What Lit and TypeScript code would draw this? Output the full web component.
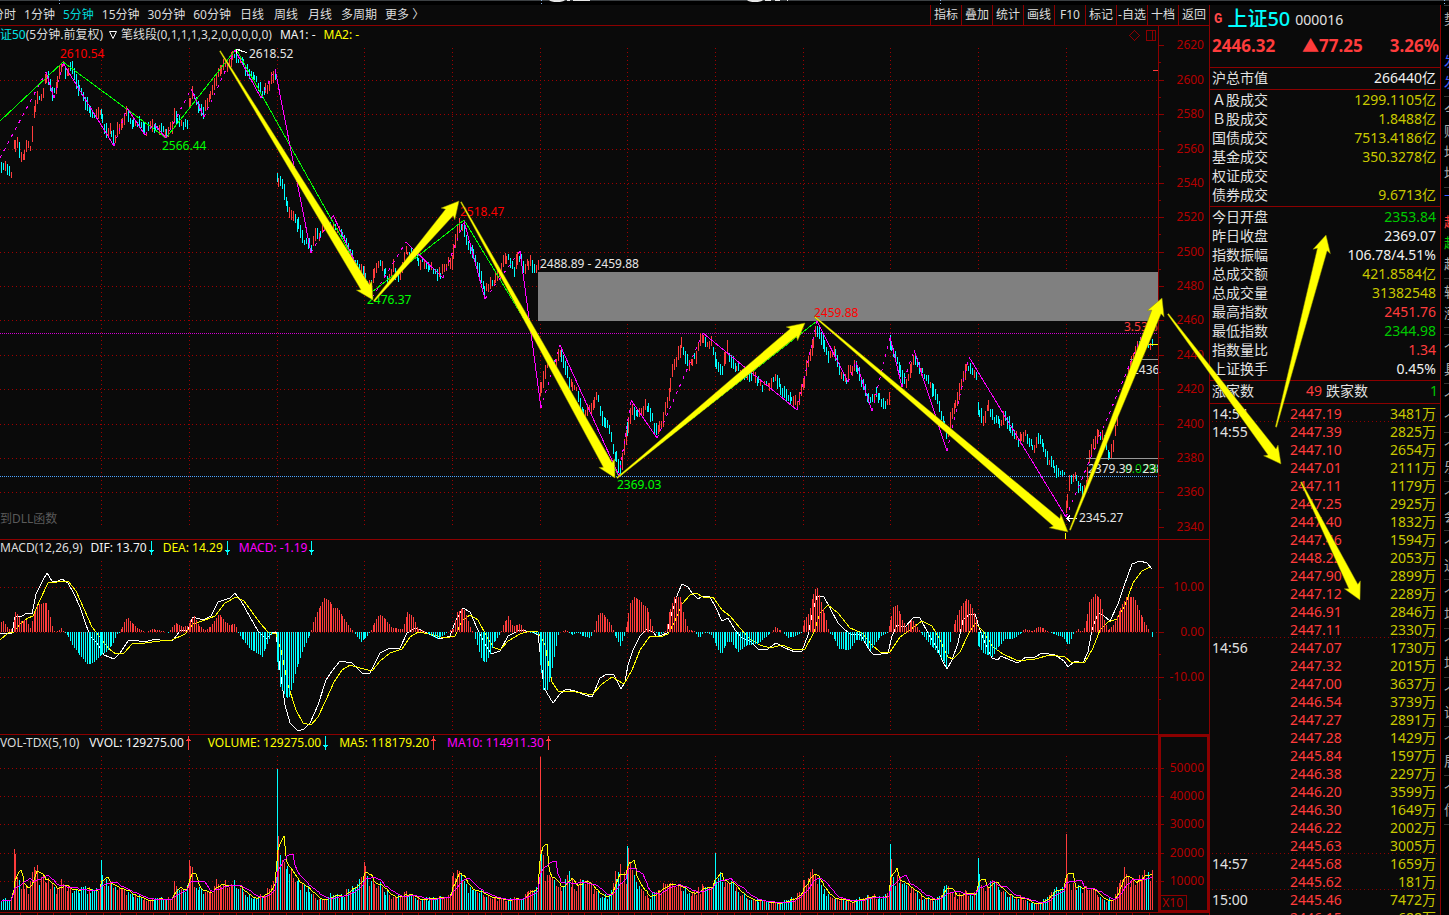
import { LitElement, html, svg, css } from "lit";
import { customElement, property } from "lit/decorators.js";
import { classMap } from "lit/directives/class-map.js";

type Knots = number[];

/* Bars: 48 five-minute candles for each trading day. */
const DAY_STARTS = [14, 101, 189, 277, 364, 452, 540, 627, 715, 803, 890, 978, 1066];
const BAR_X: number[] = [];
for (let x = 1; x < 13; x += 2) BAR_X.push(x);
DAY_STARTS.forEach((s) => {
  for (let j = 0; j < 48; j++) BAR_X.push(s + Math.floor(j * 1.83));
});

function sample(k: Knots, x: number): number {
  for (let i = 2; i < k.length; i += 2) {
    if (x <= k[i]) {
      if (x === k[i]) return k[i + 1];
      const t = (x - k[i - 2]) / (k[i] - k[i - 2]);
      return k[i - 1] + (k[i + 1] - k[i - 1]) * Math.max(0, t);
    }
  }
  return k[k.length - 1];
}
function noise(n: number): number {
  const v = Math.sin(n * 12.9898 + 4.1) * 43758.5453;
  return v - Math.floor(v);
}
function polyline(k: Knots): string {
  let s = "";
  for (let i = 0; i < k.length; i += 2) s += (i ? " " : "") + k[i] + "," + k[i + 1];
  return s;
}

const PRICE: Knots = [
  0, 165, 5, 168, 9, 172, 13, 173, 14, 145, 17, 140, 20, 155, 23, 156, 26, 145, 31, 147, 33, 120, 35, 105, 37, 98, 40, 100,
  43, 90, 46, 76, 49, 82, 52, 93, 55, 93, 57, 80, 60, 67, 63, 66, 66, 72, 70, 67, 74, 73, 78, 88, 82, 93, 86, 104, 90, 112,
  95, 115, 100, 112, 103, 125, 107, 135, 110, 130, 114, 139, 118, 128, 122, 124, 126, 112, 131, 122, 138, 122, 145, 132,
  152, 126, 160, 128, 166, 134, 172, 125, 175, 115, 180, 122, 188, 127, 189, 105, 193, 92, 197, 105, 203, 113, 208, 98,
  213, 86, 218, 72, 223, 65, 228, 65, 233, 53, 236, 60, 242, 62, 248, 75, 256, 80, 262, 93, 267, 88, 275, 73, 276, 76,
  277, 180, 281, 178, 285, 195, 288, 215, 293, 215, 298, 225, 303, 240, 307, 240, 311, 247, 315, 232, 320, 235, 323, 225,
  338, 230, 345, 240, 352, 258, 358, 268, 363, 270, 366, 283, 371, 286, 377, 262, 383, 270, 388, 280, 393, 268, 399, 280,
  405, 252, 412, 252, 418, 262, 425, 262, 432, 270, 440, 274, 447, 265, 452, 262, 455, 240, 459, 227, 463, 230, 468, 245,
  474, 255, 480, 275, 485, 291, 490, 283, 497, 278, 502, 265, 507, 257, 514, 270, 518, 257, 524, 268, 530, 260, 535, 272,
  539, 265, 540, 390, 544, 372, 550, 362, 555, 365, 560, 351, 566, 368, 570, 385, 576, 388, 583, 415, 588, 410, 597, 397,
  603, 420, 608, 425, 612, 445, 617, 462, 620, 470, 624, 450, 628, 425, 631, 408, 636, 415, 642, 412, 646, 405, 650, 415,
  657, 433, 662, 420, 668, 400, 672, 370, 678, 355, 681, 345, 688, 365, 695, 358, 700, 340, 705, 342, 712, 343, 716, 365,
  722, 368, 727, 350, 733, 365, 740, 370, 748, 375, 756, 378, 762, 386, 768, 385, 775, 378, 782, 390, 790, 400, 797, 404,
  803, 385, 806, 370, 812, 345, 816, 328, 821, 340, 828, 355, 834, 350, 840, 373, 846, 378, 850, 370, 855, 366, 862, 385,
  870, 402, 876, 395, 885, 405, 889, 398, 890, 345, 896, 358, 901, 372, 905, 383, 909, 375, 914, 355, 920, 370, 926, 378,
  933, 390, 940, 410, 947, 437, 951, 415, 957, 400, 962, 378, 967, 364, 972, 372, 977, 374, 978, 408, 982, 420, 988, 408,
  995, 420, 1000, 425, 1004, 412, 1010, 428, 1018, 440, 1025, 433, 1033, 448, 1039, 440, 1048, 458, 1056, 470, 1065, 475,
  1066, 508, 1069, 485, 1075, 475, 1078, 485, 1082, 495, 1086, 485, 1090, 450, 1095, 440, 1098, 432, 1104, 440, 1109, 455,
  1114, 440, 1118, 410, 1125, 385, 1130, 365, 1137, 347, 1142, 342, 1148, 345, 1152, 342,
];
const HIST: Knots = [
  0, 8, 2, 11, 4, 10, 8, 3, 13, 3, 15, 20, 18, 17, 21, 11, 26, 12, 30, 4, 34, 18, 38, 28, 46, 29, 50, 15, 53, 2, 56, 0, 61, 4,
  64, 0, 67, -3, 72, -13, 80, -24, 88, -33, 95, -29, 103, -21, 107, -20, 113, -11, 117, -2, 120, 0, 123, 8, 127, 15, 131, 10,
  138, 3, 145, 0, 152, 3, 162, 1, 168, -1, 173, 6, 176, 9, 182, 5, 188, 6, 190, 12, 194, 16, 199, 6, 205, 2, 211, 6, 219, 18,
  225, 10, 229, 7, 235, 8, 238, -1, 243, -8, 250, -17, 258, -22, 262, -25, 266, -14, 272, -1, 275, 1, 277, -30, 280, -55,
  284, -62, 288, -68, 292, -55, 296, -38, 302, -20, 310, -2, 313, 10, 318, 22, 324, 34, 329, 32, 333, 24, 338, 24, 343, 14,
  350, 4, 355, -2, 361, -10, 366, -5, 370, 0, 373, 7, 379, 18, 385, 13, 392, 4, 402, 3, 405, 10, 407, 20, 413, 15, 418, 3,
  424, 1, 430, -3, 437, -7, 444, -3, 449, 1, 453, 3, 457, 20, 463, 24, 467, 14, 471, 2, 473, 0, 476, -10, 480, -24, 485, -32,
  490, -22, 494, -10, 500, -2, 503, 7, 508, 16, 513, 5, 520, 9, 524, 1, 530, -1, 539, -3, 540, -33, 543, -58, 547, -58,
  551, -42, 555, -20, 558, -3, 560, 0, 565, 2, 572, -3, 577, 0, 582, -4, 590, -6, 594, 2, 597, 16, 601, 20, 608, 12, 612, 5,
  615, -4, 620, -14, 625, -1, 627, 10, 629, 28, 634, 35, 639, 32, 643, 27, 647, 24, 651, 9, 654, 1, 658, -4, 663, -1, 666, 2,
  669, 20, 674, 35, 680, 35, 683, 20, 688, 2, 694, 1, 699, -7, 703, 0, 712, -3, 716, -14, 721, -23, 727, -10, 731, -10,
  738, -20, 747, -13, 757, -12, 767, -4, 772, 1, 775, 5, 781, 1, 788, -6, 796, -4, 802, -1, 804, 12, 809, 20, 814, 42, 817, 44,
  821, 30, 826, 12, 829, -1, 833, -4, 838, -17, 849, -18, 856, -8, 864, -9, 870, -19, 876, -10, 882, -3, 888, -1, 890, 12,
  893, 25, 897, 27, 902, 12, 906, 5, 912, 13, 918, 3, 923, -4, 930, -13, 940, -24, 946, -35, 950, -10, 952, 0, 955, 12,
  960, 25, 967, 34, 973, 22, 977, 10, 978, -14, 984, -22, 992, -25, 998, -15, 1005, -7, 1013, -7, 1020, -2, 1024, 3, 1033, 1,
  1039, 6, 1047, 1, 1055, -3, 1063, -5, 1068, -14, 1073, -2, 1078, 3, 1081, 0, 1085, 5, 1089, 30, 1095, 38, 1100, 33,
  1104, 12, 1108, 2, 1114, 8, 1120, 24, 1126, 35, 1134, 35, 1139, 22, 1144, 10, 1150, 0, 1152, -5,
];
const DIF: Knots = [
  0, 633, 12, 633, 15, 617, 22, 616, 27, 613, 32, 614, 36, 594, 42, 582, 47, 573, 52, 581, 57, 582, 62, 579, 68, 583, 74, 594,
  80, 607, 86, 625, 91, 637, 97, 643, 104, 655, 114, 659, 120, 653, 128, 641, 133, 640, 145, 642, 155, 639, 165, 641, 173, 640,
  180, 631, 188, 630, 193, 617, 203, 620, 211, 616, 218, 602, 230, 598, 235, 593, 241, 601, 250, 617, 258, 631, 266, 639,
  272, 633, 276, 632, 280, 670, 285, 705, 290, 723, 298, 731, 304, 729, 310, 723, 318, 705, 326, 680, 332, 671, 340, 661,
  352, 663, 362, 673, 370, 673, 380, 653, 388, 649, 400, 648, 407, 633, 416, 628, 425, 632, 440, 639, 450, 636, 456, 620,
  463, 608, 470, 612, 477, 628, 484, 642, 491, 654, 500, 651, 508, 636, 520, 630, 532, 632, 538, 635, 541, 660, 544, 688,
  553, 703, 560, 694, 566, 689, 575, 691, 585, 695, 592, 697, 600, 678, 607, 674, 614, 675, 621, 689, 625, 682, 628, 665,
  633, 650, 640, 636, 647, 629, 653, 632, 657, 637, 667, 633, 672, 612, 678, 593, 682, 584, 688, 587, 692, 593, 698, 599,
  703, 596, 710, 597, 716, 608, 722, 621, 728, 618, 735, 630, 742, 638, 750, 641, 758, 649, 768, 649, 776, 643, 785, 648,
  795, 652, 802, 651, 808, 635, 813, 610, 817, 596, 824, 597, 830, 608, 838, 623, 845, 630, 852, 635, 860, 634, 870, 651,
  874, 655, 888, 653, 892, 636, 897, 625, 905, 627, 914, 617, 920, 618, 928, 633, 938, 650, 943, 662, 947, 669, 952, 660,
  958, 643, 963, 620, 970, 614, 975, 614, 980, 630, 985, 643, 992, 658, 998, 660, 1001, 656, 1010, 660, 1018, 663, 1026, 657,
  1035, 657, 1042, 653, 1055, 655, 1064, 661, 1068, 667, 1075, 661, 1083, 663, 1088, 652, 1092, 630, 1098, 613, 1104, 616,
  1110, 621, 1118, 604, 1124, 586, 1132, 564, 1140, 561, 1147, 563, 1152, 569,
];
const DEA: Knots = [
  0, 640, 8, 633, 14, 632, 20, 624, 28, 618, 33, 616, 40, 600, 48, 583, 57, 582, 68, 581, 76, 591, 84, 609, 92, 627, 100, 637,
  108, 648, 116, 654, 124, 653, 132, 644, 145, 643, 160, 641, 172, 640, 185, 634, 193, 624, 205, 620, 215, 616, 225, 603,
  236, 597, 244, 601, 252, 612, 260, 623, 268, 632, 276, 634, 281, 650, 288, 685, 296, 710, 303, 723, 311, 725, 318, 717,
  326, 700, 334, 682, 342, 670, 350, 665, 360, 668, 372, 671, 380, 661, 390, 653, 402, 649, 410, 637, 418, 632, 430, 634,
  445, 638, 455, 636, 462, 621, 470, 615, 478, 620, 486, 635, 493, 647, 500, 650, 508, 641, 520, 634, 530, 631, 538, 632,
  545, 645, 552, 682, 558, 691, 570, 691, 582, 693, 592, 695, 602, 684, 612, 677, 624, 684, 632, 670, 640, 650, 650, 636,
  660, 637, 668, 634, 675, 621, 682, 604, 690, 595, 696, 593, 703, 597, 713, 597, 722, 610, 730, 616, 740, 628, 750, 639,
  760, 645, 770, 648, 782, 645, 795, 650, 805, 649, 814, 632, 820, 613, 828, 605, 838, 613, 850, 628, 862, 633, 872, 645,
  880, 652, 890, 652, 900, 637, 910, 630, 922, 621, 932, 626, 940, 640, 948, 657, 953, 659, 960, 652, 968, 635, 975, 623,
  983, 631, 993, 647, 1003, 654, 1018, 661, 1035, 659, 1050, 655, 1065, 657, 1072, 663, 1085, 662, 1093, 648, 1100, 630,
  1108, 622, 1117, 619, 1125, 605, 1133, 583, 1142, 571, 1150, 567,
];
const VOLUME: Knots = [
  0, 10, 13, 12, 14, 61, 16, 38, 20, 28, 28, 18, 33, 42, 36, 50, 38, 35, 46, 33, 55, 20, 62, 28, 70, 22, 80, 20, 90, 22,
  100, 22, 101, 50, 103, 35, 110, 25, 117, 26, 130, 16, 145, 12, 155, 12, 173, 14, 174, 28, 180, 18, 188, 26, 189, 50, 191, 46,
  195, 26, 203, 18, 208, 16, 216, 30, 220, 30, 228, 24, 233, 31, 240, 22, 255, 14, 262, 16, 272, 25, 276, 30, 277, 141, 278, 75,
  282, 50, 287, 55, 292, 40, 300, 28, 310, 20, 320, 12, 335, 16, 345, 18, 356, 28, 363, 30, 364, 48, 366, 32, 377, 30, 385, 18,
  395, 14, 405, 18, 420, 11, 440, 13, 451, 15, 452, 34, 457, 43, 463, 32, 470, 20, 480, 22, 490, 12, 505, 11, 520, 14, 535, 20,
  539, 26, 540, 153, 541, 60, 545, 38, 551, 35, 560, 22, 569, 37, 575, 20, 581, 33, 590, 26, 600, 15, 610, 16, 615, 36, 620, 42,
  626, 30, 627, 64, 629, 50, 634, 32, 640, 22, 650, 14, 660, 20, 671, 34, 680, 26, 690, 15, 700, 22, 714, 25, 715, 57, 716, 35,
  719, 38, 725, 28, 735, 24, 745, 14, 760, 9, 780, 8, 795, 14, 802, 18, 803, 30, 812, 38, 817, 34, 825, 18, 840, 12, 850, 9,
  860, 13, 880, 14, 889, 18, 890, 66, 892, 33, 903, 32, 912, 20, 922, 12, 935, 12, 946, 26, 955, 15, 965, 18, 977, 20, 978, 52,
  980, 32, 985, 26, 993, 31, 1005, 16, 1020, 14, 1030, 9, 1040, 8, 1052, 18, 1065, 26, 1066, 76, 1067, 38, 1070, 28, 1078, 22,
  1090, 26, 1100, 12, 1112, 10, 1119, 30, 1124, 38, 1130, 32, 1140, 34, 1152, 38,
];
const SEGMENTS: Knots = [0, 121, 63, 62, 166, 138, 236, 49, 372, 292, 464, 220, 619, 476, 817, 321];
/* Strokes alternate: a rise is dashed, the fall after it is solid. */
const STROKES: Knots = [
  0, 158, 46, 72, 54, 98, 63, 63, 114, 146, 127, 108, 145, 135, 154, 124, 166, 138, 191, 89, 204, 117, 235, 50, 261, 98,
  275, 69, 311, 253, 333, 215, 372, 298, 406, 242, 443, 278, 464, 221, 485, 299, 520, 251, 541, 408, 560, 345, 619, 476,
  631, 400, 657, 438, 703, 333, 797, 410, 817, 321, 848, 382, 856, 362, 872, 411, 890, 337, 902, 387, 914, 350, 947, 451,
  969, 357, 1066, 517, 1142, 335,
];
const ARROWS = [
  [220, 51, 373, 300], [374, 301, 459, 201], [461, 202, 615, 478], [617, 478, 805, 323], [815, 317, 1068, 532],
  [1070, 530, 1162, 298], [1168, 314, 1281, 464], [1276, 427, 1326, 235], [1301, 482, 1360, 600],
];

const RED_OPENINGS = [14, 189, 364, 452, 540, 803, 1066];

function candles() {
  let red = "", cyan = "";
  BAR_X.forEach((x, i) => {
    const open = DAY_STARTS.includes(x);
    const mid = sample(PRICE, x);
    const step = i && !open ? Math.min(8, Math.abs(mid - sample(PRICE, BAR_X[i - 1]))) : 6;
    const half = 1.5 + noise(i) * 4 + step * 0.4;
    const c = mid + (noise(i + 900) - 0.5) * 6;
    const up = open ? RED_OPENINGS.includes(x) : mid + (noise(i + 300) - 0.5) * 4 < sample(PRICE, x - 1);
    const d = `M${x + 0.5} ${Math.round(c - half)}V${Math.round(c + half)}`;
    if (up) red += d; else cyan += d;
  });
  return { red, cyan };
}
function histogram() {
  let red = "", cyan = "";
  BAR_X.forEach((x) => {
    const v = Math.round(sample(HIST, x));
    if (v > 0) red += `M${x + 0.5} 632V${632 - v}`;
    else if (v < 0) cyan += `M${x + 0.5} 632V${632 - v}`;
  });
  return { red, cyan };
}
function volumes() {
  let red = "", cyan = "";
  const h: number[] = [];
  BAR_X.forEach((x, i) => {
    const open = DAY_STARTS.includes(x);
    const v = sample(VOLUME, x) * (open ? 1 : 0.72 + noise(i + 50) * 0.42);
    h.push(v);
    const d = `M${x + 0.5} 910V${Math.round(910 - v)}`;
    const up = open ? RED_OPENINGS.includes(x) : noise(i + 300) < 0.32 || sample(PRICE, x) < sample(PRICE, x - 2) - 1;
    if (up) red += d; else cyan += d;
  });
  const average = (n: number) =>
    h.map((_, i) => {
      const part = h.slice(Math.max(0, i - n + 1), i + 1);
      return `${BAR_X[i]},${Math.round(910 - part.reduce((a, b) => a + b, 0) / part.length)}`;
    }).join(" ");
  return { red, cyan, ma5: average(5), ma10: average(10) };
}
function arrowPoints([x0, y0, x1, y1]: number[]): string {
  const len = Math.hypot(x1 - x0, y1 - y0);
  const ux = (x1 - x0) / len, uy = (y1 - y0) / len;
  const at = (back: number, side: number) => `${(x1 - ux * back - uy * side).toFixed(1)},${(y1 - uy * back + ux * side).toFixed(1)}`;
  return [at(len, 0.6), at(15, 5), at(17, 9), at(0, 0), at(17, -9), at(15, -5), at(len, -0.6)].join(" ");
}

const BARS = candles();
const HISTO = histogram();
const VOLS = volumes();

function grid(rows: number[], top: number, bottom: number) {
  return svg`
    ${rows.map((y) => svg`<path class="dots" d="M0 ${y + 0.5}H1158"/>`)}
    ${DAY_STARTS.slice(1).map((x) => svg`<path class="dots" d="M${x + 0.5} ${top}V${bottom}"/>`)}`;
}

@customElement("price-chart")
export class PriceChart extends LitElement {
  static styles = css`
    :host { display: block; min-width: 0; }
    .panel { display: grid; position: relative; }
    .panel > * { grid-area: 1 / 1; }
    svg { display: block; width: 100%; height: auto; font-size: 12px; }
    .legend { display: flex; align-items: center; height: 18px; font-size: 12px; line-height: 18px; color: #dcdcdc; white-space: pre; z-index: 1; }
    .legend.tall { height: 16px; line-height: 16px; }
    .clip { margin-left: -12px; }
    .item { display: flex; align-items: center; }
    .g1 { margin-left: 8px; }
    .g2 { margin-left: 10px; }
    .g3 { margin-left: 16px; }
    .legend svg { flex: none; width: 7px; height: 14px; margin-left: 1px; }
    .legend svg.tri { width: 10px; height: 10px; margin: 0 3px 0 5px; }
    .white { color: #f4f4f4; fill: #e6e6e6; }
    .cyan { color: #00e5e5; }
    .yellow { color: #ff0; }
    .magenta { color: #f0f; }
    .dots { stroke: #a00000; stroke-width: 1; stroke-dasharray: 1 3; fill: none; shape-rendering: crispEdges; }
    .edge { stroke: #8c0000; stroke-width: 1; fill: none; shape-rendering: crispEdges; }
    .thick { stroke: #8c0000; stroke-width: 2; fill: none; shape-rendering: crispEdges; }
    .up { stroke: #ff3c3c; stroke-width: 1; fill: none; shape-rendering: crispEdges; }
    .down { stroke: #0ff; stroke-width: 1; fill: none; shape-rendering: crispEdges; }
    .axis { fill: #b40000; text-anchor: end; }
    .high { fill: #f00; }
    .low { fill: #0f0; }
    .line { fill: none; stroke-width: 1; shape-rendering: crispEdges; }
    .s-green { stroke: #0f0; }
    .s-magenta { stroke: #f0f; }
    .s-yellow { stroke: #ff0; }
    .s-white { stroke: #fff; }
    .s-gray { stroke: #999; }
    .dash { stroke-dasharray: 3 5; }
    .cap { stroke: #d000d0; stroke-dasharray: 1 1; }
    .base { stroke: #4aa3ff; stroke-dasharray: 1 1; }
    .gap { fill: #808080; }
    .note { fill: #5a5a5a; }
    .rise { fill: #ff3c3c; }
    .fall { fill: #00c800; }
  `;

  private mark(up: boolean) {
    return up
      ? html`<svg viewBox="0 0 7 14"><path class="up" d="M3.5 0V14M2 3.5H5M1 4.5H6"/></svg>`
      : html`<svg viewBox="0 0 7 14"><path class="down" d="M3.5 0V14M1 9.5H6M2 10.5H5"/></svg>`;
  }
  private axis(values: [string, number][], minor: number) {
    return svg`
      <path class="edge" d="${values.map(([, y]) => `M1159 ${y + 0.5}h5M1159 ${y + minor + 0.5}h2`).join("")}"/>
      ${values.map(([t, y]) => svg`<text class="axis" x="1204" y="${y + 4}">${t}</text>`)}`;
  }
  private strokes() {
    const out = [];
    for (let i = 0; i + 3 < STROKES.length; i += 2) {
      const rising = STROKES[i + 3] < STROKES[i + 1];
      out.push(svg`<polyline class="line s-magenta ${rising ? "dash" : ""}" points="${polyline(STROKES.slice(i, i + 4))}"/>`);
    }
    return out;
  }

  render() {
    const rows = [80, 114, 149, 183, 217, 252, 286, 320, 355, 389, 424, 458, 492];
    const prices: [string, number][] = [45, ...rows, 527].map((y, i) => [String(2620 - i * 20), y]);
    return html`
      <section class="panel">
        <svg viewBox="0 26 1209 514" role="img" aria-label="K线">
          <defs><clipPath id="plot"><path d="M0 26H1158V540H0z"/></clipPath></defs>
          ${grid(rows, 48, 526)}
          <path class="edge" d="M1158.5 26V540M0 539.5H1209M1134.5 30.5l5 5l-5 5l-5 -5zM1146.5 30.5h9v10h-9zM1152.5 30.5v10"/>
          <path class="up" d="M1153 70.5H1158"/>
          ${this.axis(prices, 17)}
          <path class="line base" d="M0 476.5H1158"/>
          <path class="line cap" d="M0 333.5H1158"/>
          <path class="up" d="${BARS.red}"/>
          <path class="down" d="${BARS.cyan}"/>
          <path class="gap" d="M538 272H1158V321H538z"/>
          <polyline class="line s-green" points="${polyline(SEGMENTS)}"/>
          ${this.strokes()}
          <path class="line s-gray" d="M1130 359.5H1158M1086 458.5H1158"/>
          <path class="line s-yellow" d="M1148 344.5H1158M1065.5 533V539"/>
          <path class="line s-white" d="M247 52.5L236 49.5M236 49.5h4M236 49.5v4M1077 518.5H1067M1070 515.5l-3 3l3 3"/>
          <text class="high" x="60" y="58">2610.54</text>
          <text class="white" x="249" y="58">2618.52</text>
          <text class="low" x="162" y="150">2566.44</text>
          <text class="low" x="367" y="304">2476.37</text>
          <text class="high" x="460" y="216">2518.47</text>
          <text class="white" x="540" y="268">2488.89 - 2459.88</text>
          <text class="high" x="814" y="317">2459.88</text>
          <text class="low" x="617" y="489">2369.03</text>
          <text class="white" x="1079" y="522">2345.27</text>
          <text class="note" x="0" y="523">到DLL函数</text>
          <g clip-path="url(#plot)">
            <text class="rise" x="1124" y="331">3.53%</text>
            <text class="white" x="1132" y="374">2436.61</text>
            <text class="fall" x="1125" y="473">0.02%</text>
            <text class="white" x="1088" y="473">2379.39 - 2381.02</text>
          </g>
        </svg>
        <div class="legend">
          <span class="cyan clip">上证50</span><span>(5分钟.前复权)</span>
          <svg class="tri" viewBox="0 0 10 10"><path class="s-white" fill="none" d="M1.500 1.500H8.500L5 8.500z"/></svg>
          <span>笔线段(0,1,1,1,3,2,0,0,0,0,0)</span>
          <span class="white g1">MA1: -</span><span class="yellow g1">MA2: -</span>
        </div>
      </section>
      <section class="panel">
        <svg viewBox="0 540 1209 195" role="img" aria-label="MACD">
          ${grid([587, 632, 677], 561, 733)}
          <path class="edge" d="M1158.5 540V735M0 734.5H1209"/>
          ${this.axis([["10.00", 587], ["0.00", 632], ["-10.00", 677]], 22)}
          <polyline class="line s-white" points="${polyline(DIF)}"/>
          <polyline class="line s-yellow" points="${polyline(DEA)}"/>
          <path class="up" d="${HISTO.red}"/>
          <path class="down" d="${HISTO.cyan}"/>
        </svg>
        <div class="legend tall">
          <span>MACD(12,26,9)</span>
          <span class="item white g1">DIF: 13.70${this.mark(false)}</span>
          <span class="item yellow g1">DEA: 14.29${this.mark(false)}</span>
          <span class="item magenta g1">MACD: -1.19${this.mark(false)}</span>
        </div>
      </section>
      <section class="panel">
        <svg viewBox="0 735 1209 180" role="img" aria-label="VOL">
          ${grid([768, 796, 824, 853, 881], 756, 910)}
          <path class="edge" d="M1158.5 735V912M0 912.5H1209M1159 895.5H1186.5V911"/>
          <path class="thick" d="M1160 736H1208V911H1160z"/>
          <path class="edge" d="${Array.from({ length: 69 }, (_, i) => `M${Math.round(20 + i * 16.6) + 0.5} 913v2`).join("")}"/>
          ${this.axis([["50000", 768], ["40000", 796], ["30000", 824], ["20000", 853], ["10000", 881]], 14)}
          <text class="axis" x="1183" y="907">X10</text>
          <path class="up" d="${VOLS.red}"/>
          <path class="down" d="${VOLS.cyan}"/>
          <polyline class="line s-yellow" points="${VOLS.ma5}"/>
          <polyline class="line s-magenta" points="${VOLS.ma10}"/>
        </svg>
        <div class="legend tall">
          <span>VOL-TDX(5,10)</span>
          <span class="item white g2">VVOL: 129275.00${this.mark(true)}</span>
          <span class="item yellow g3">VOLUME: 129275.00${this.mark(false)}</span>
          <span class="item yellow g2">MA5: 118179.20${this.mark(true)}</span>
          <span class="item magenta g2">MA10: 114911.30${this.mark(true)}</span>
        </div>
      </section>`;
  }
}

type Row = [string, string, string];
const TURNOVER: Row[] = [
  ["Ａ股成交", "1299.1105亿", "y"], ["Ｂ股成交", "1.8488亿", "y"], ["国债成交", "7513.4186亿", "y"],
  ["基金成交", "350.3278亿", "y"], ["权证成交", "", "y"], ["债券成交", "9.6713亿", "y"],
];
const TODAY: Row[] = [
  ["今日开盘", "2353.84", "g"], ["昨日收盘", "2369.07", "w"], ["指数振幅", "106.78/4.51%", "w"],
  ["总成交额", "421.8584亿", "y"], ["总成交量", "31382548", "y"], ["最高指数", "2451.76", "r"],
  ["最低指数", "2344.98", "g"], ["指数量比", "1.34", "r"], ["上证换手", "0.45%", "w"],
];
const TICKS: Row[] = [
  ["14:54", "2447.19", "3481万"], ["14:55", "2447.39", "2825万"], ["", "2447.10", "2654万"], ["", "2447.01", "2111万"],
  ["", "2447.11", "1179万"], ["", "2447.25", "2925万"], ["", "2447.40", "1832万"], ["", "2447.46", "1594万"],
  ["", "2448.22", "2053万"], ["", "2447.90", "2899万"], ["", "2447.12", "2289万"], ["", "2446.91", "2846万"],
  ["", "2447.11", "2330万"], ["14:56", "2447.07", "1730万"], ["", "2447.32", "2015万"], ["", "2447.00", "3637万"],
  ["", "2446.54", "3739万"], ["", "2447.27", "2891万"], ["", "2447.28", "1429万"], ["", "2445.84", "1597万"],
  ["", "2446.38", "2297万"], ["", "2446.20", "3599万"], ["", "2446.30", "1649万"], ["", "2446.22", "2002万"],
  ["", "2445.63", "3005万"], ["14:57", "2445.68", "1659万"], ["", "2445.62", "181万"], ["15:00", "2445.46", "7472万"],
  ["", "2446.15", "688万"],
];

@customElement("quote-panel")
export class QuotePanel extends LitElement {
  static styles = css`
    :host { display: block; border-left: 1px solid #8c0000; border-right: 1px solid #8c0000; background: #0a0a0a; color: #e1e1e1; font-size: 14px; overflow: hidden; min-height: 0; }
    header { height: 62px; }
    .name { display: flex; align-items: center; gap: 5px; height: 28px; padding-left: 4px; }
    .flag { font: bold 14px/28px "Liberation Mono", monospace; color: #ff4848; }
    h1 { margin: 0; font-size: 20px; font-weight: 500; line-height: 24px; color: #0ff; }
    .quote { display: flex; justify-content: space-between; padding: 0 1px 0 2px; font-size: 17px; font-weight: bold; line-height: 26px; color: #ff3c3c; }
    dl { margin: 0; padding: 0 4px 2px 2px; border-top: 1px solid #8c0000; }
    .row { display: flex; justify-content: space-between; line-height: 19px; height: 19px; }
    .wide { display: flex; line-height: 19px; height: 20px; }
    .wide .count { width: 68px; text-align: right; margin-right: 4px; }
    .wide .last { flex: 1; text-align: right; margin-right: -2px; }
    dt, dd { margin: 0; }
    .y { color: #c8c800; }
    .g { color: #00c800; }
    .r { color: #ff3c3c; }
    .w { color: #f0f0f0; }
    table { width: 100%; border-spacing: 0; border-top: 1px solid #8c0000; table-layout: fixed; }
    td { padding: 1px 0 0; height: 17px; line-height: 17px; }
    .split { background: repeating-linear-gradient(90deg, #8c0000 0 1px, transparent 1px 4px) 2px 100% / 100% 1px no-repeat; }
    .time { width: 78px; padding-left: 2px; }
    .vol { padding-right: 4px; text-align: right; }
  `;
  private rows(list: Row[]) {
    return list.map(([k, v, c]) => html`<div class="row"><dt>${k}</dt><dd class="${c}">${v}</dd></div>`);
  }
  render() {
    return html`
      <header>
        <div class="name"><span class="flag">G</span><h1>上证50</h1><span>000016</span></div>
        <div class="quote"><span>2446.32</span><span>▲77.25</span><span>3.26%</span></div>
      </header>
      <dl><div class="row"><dt>沪总市值</dt><dd class="w">266440亿</dd></div></dl>
      <dl>${this.rows(TURNOVER)}</dl>
      <dl>${this.rows(TODAY)}</dl>
      <dl class="wide"><dt>涨家数</dt><dd class="r count">49</dd><dt>跌家数</dt><dd class="g last">1</dd></dl>
      <table>
        <tbody>
          ${TICKS.map(([t, p, v], i) => html`
            <tr class=${classMap({ split: !!TICKS[i + 1]?.[0] })}>
              <td class="time">${t}</td><td class="r">${p}</td><td class="vol y">${v}</td>
            </tr>`)}
        </tbody>
      </table>`;
  }
}

@customElement("app-root")
export class AppRoot extends LitElement {
  @property() period = "5分钟";

  static styles = css`
    :host { display: block; position: relative; height: 100vh; overflow: hidden; background: #0a0a0a; color: #dcdcdc; font-family: "Noto Sans", "Noto Sans CJK SC", sans-serif; }
    .shell { display: grid; grid-template-columns: minmax(0, 1fr) 232px 8px; grid-template-rows: 5px minmax(0, 1fr); height: 100%; }
    .strip { grid-column: 1 / -1; display: flex; background: #000; border-top: 1px solid #3c4043; }
    .left { display: flex; flex-direction: column; min-width: 0; }
    .toolbar { display: flex; justify-content: space-between; flex: none; height: 20px; border-bottom: 1px solid #8c0000; overflow: hidden; }
    button { font: inherit; font-size: 12px; line-height: 20px; padding: 0; border: 0; background: none; color: inherit; white-space: nowrap; cursor: pointer; }
    .periods { display: flex; gap: 8px; margin-left: -8px; }
    .periods .zh { padding: 0 1px; }
    .periods .on { color: #00d8d8; }
    .tools { display: grid; grid-template-columns: repeat(9, 31px); }
    .tools button { border-left: 1px solid #8c0000; overflow: hidden; }
    .side { background: #000; overflow: hidden; padding-left: 3px; font-size: 14px; line-height: 20px; color: #aaa; }
    .side p { margin: 0; width: 14px; height: 21px; }
    .side .rule { border-top: 1px solid #333; padding: 3px 0; }
    .side .blue { color: #4060ff; }
    .side .red { color: #ff3c3c; }
    .side .green { color: #00c800; }
    .marks { position: absolute; inset: 0 0 auto 0; width: 100%; pointer-events: none; }
    .arrow { fill: #ff0; stroke: #8c8c00; stroke-width: .5; }
    .blob { fill: #e6e6e6; }
    .tick { fill: #8fb8e8; }
  `;
  render() {
    const periods = ["分时", "1分钟", "5分钟", "15分钟", "30分钟", "60分钟", "日线", "周线", "月线", "多周期", "更多 〉"];
    const tools = ["指标", "叠加", "统计", "画线", "F10", "标记", "-自选", "十档", "返回"];
    const side = ["乐", "会", "通", "场", "场", "设", "展", "信"];
    return html`
      <div class="shell">
        <div class="strip"></div>
        <main class="left">
          <nav class="toolbar">
            <div class="periods">
              ${periods.map((p, i) => html`<button class=${classMap({ on: p === this.period, zh: i > 5 && i < 9 })} @click=${() => (this.period = p)}>${p}</button>`)}
            </div>
            <div class="tools">${tools.map((t) => html`<button>${t}</button>`)}</div>
          </nav>
          <price-chart></price-chart>
        </main>
        <quote-panel></quote-panel>
        <aside class="side">
          <div class="rule"><p>势</p><p></p><p class="blue">发</p><p class="blue">发</p></div>
          <div class="rule"><p>今</p><p>财</p><p>均</p><p>均</p></div>
          <div class="rule"><p class="blue">下</p><p class="red">超</p><p class="green">超</p><p>超</p></div>
          <div class="rule"><p>转</p><p>涨</p></div>
          <div class="rule"></div>
          <div class="rule"><p>个</p><p>具</p></div>
          <div class="rule"><p>个</p><p>个</p></div>
          ${side.map((s) => html`<div class="rule"><p>个</p><p>${s}</p></div>`)}
          <div class="rule"></div>
        </aside>
      </div>
      <svg class="marks" viewBox="0 0 1449 915" aria-hidden="true">
        <path class="blob" d="M549 0h16q-2 2 -8 2q-6 0 -8 -2zM567 0h3v1h-3zM573 0h17v1h-17zM747 0h16q-2 2 -8 2q-6 0 -8 -2zM765 0h6v1h-6zM775 0h5v1h-5zM787 0h1v1h-1z"/>
        <path class="tick" d="M59 0h1v1h-1zM59 3h1v1h-1zM541 0h1v1h-1zM541 3h1v1h-1zM940 0h1v1h-1zM940 3h1v1h-1zM1444 0h1v1h-1zM1444 3h1v1h-1z"/>
        ${ARROWS.map((a) => svg`<polygon class="arrow" points="${arrowPoints(a)}"/>`)}
      </svg>`;
  }
}
